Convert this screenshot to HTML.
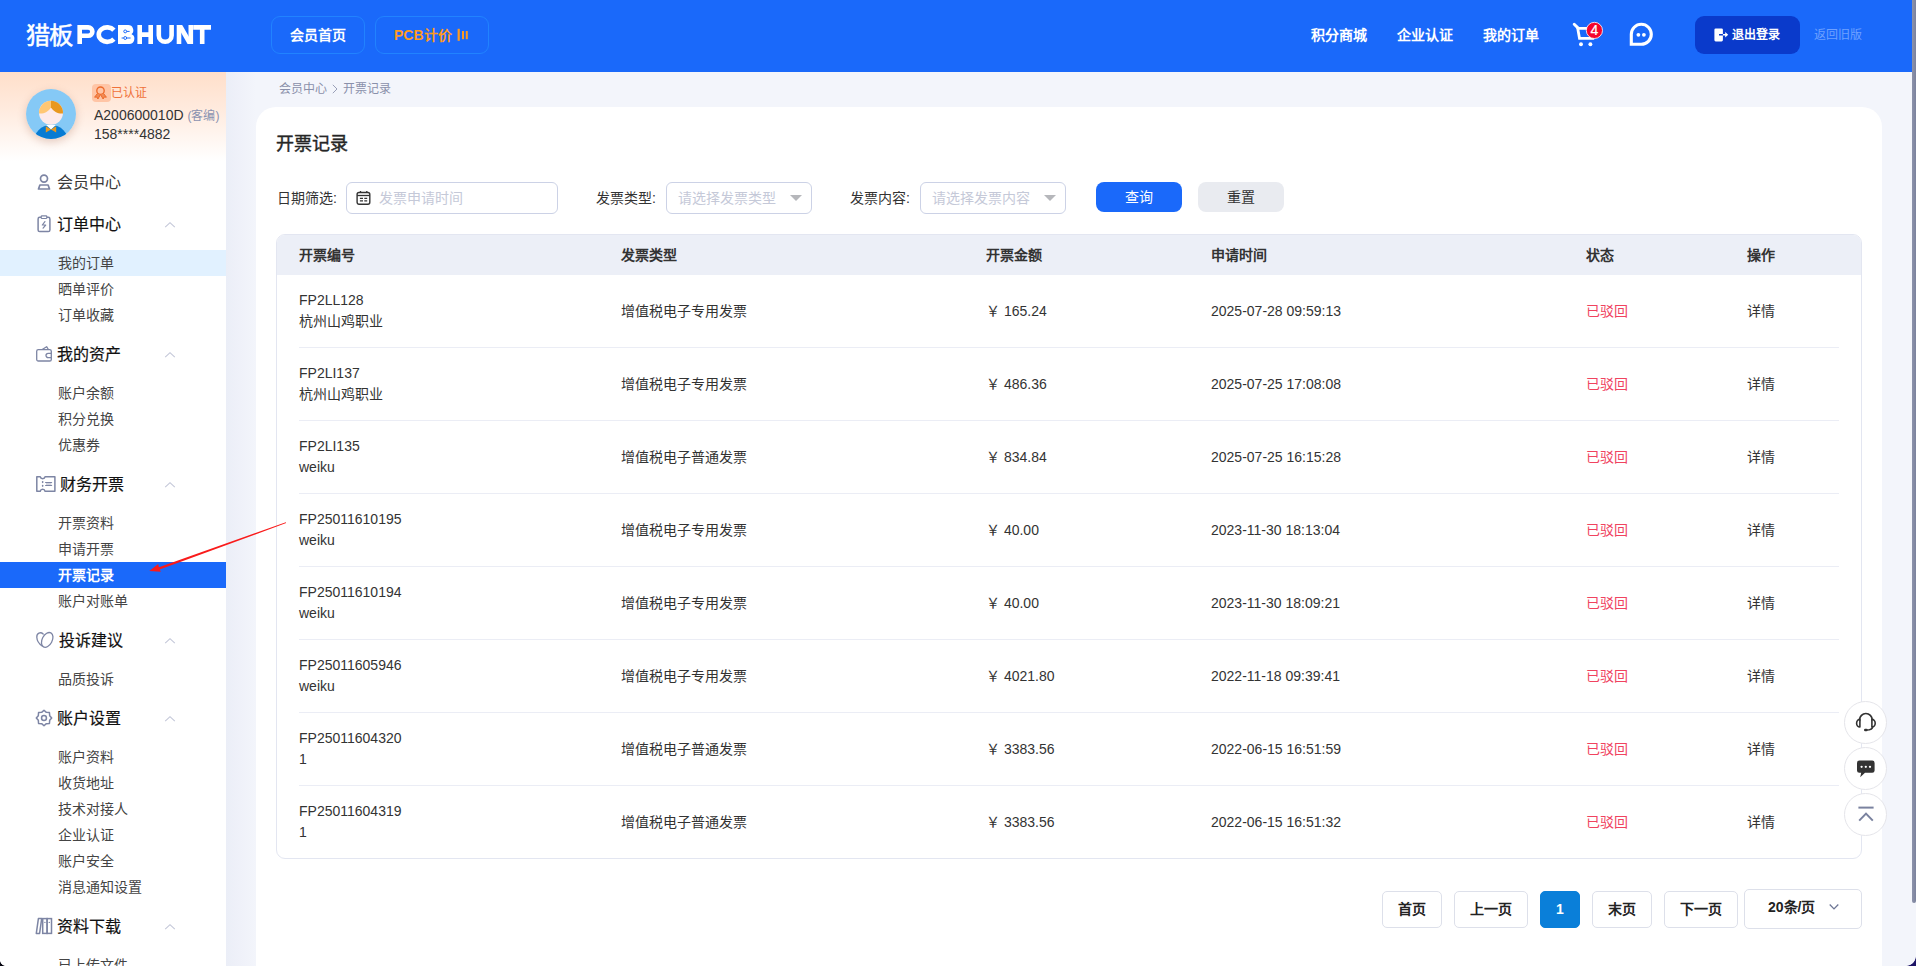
<!DOCTYPE html>
<html lang="zh-CN">
<head>
<meta charset="utf-8">
<title>开票记录</title>
<style>
*{box-sizing:border-box;margin:0;padding:0}
html,body{width:1916px;height:966px;overflow:hidden}
body{position:relative;background:#f3f5fb;font-family:"Liberation Sans",sans-serif;font-size:14px;color:#333;}
.abs{position:absolute}
/* header */
#hd{position:absolute;left:0;top:0;width:1916px;height:72px;background:#1a69fa}
.nb{position:absolute;top:16px;height:38px;border:1px solid #2183ff;border-radius:9px;font-weight:bold;font-size:14px;line-height:37px;color:#fff;white-space:nowrap}
.hl{position:absolute;top:0;height:72px;line-height:70px;font-size:14px;font-weight:bold;color:#fff;white-space:nowrap}
/* sidebar */
#sb{position:absolute;left:0;top:72px;width:226px;height:894px;background:#fff;overflow:hidden}
#sbsh{position:absolute;left:226px;top:72px;width:30px;height:894px;background:linear-gradient(90deg,#ebeef7 0,#eff1f9 45%,#f3f5fb 100%)}
#usr{position:absolute;left:0;top:0;width:226px;height:89px;background:linear-gradient(180deg,#ffdfca 0,#ffeadd 40%,#fff 100%)}
.gh{position:absolute;left:0;width:226px;height:42px;line-height:42px;font-size:16px;color:#222;white-space:nowrap}
.gh span{position:absolute;left:56.5px;top:0}
.gh svg.ic{position:absolute;left:35px;top:12px}
.gh svg.ch{position:absolute;left:164px;top:17px}
.si{position:absolute;left:0;width:226px;height:26px;line-height:26px;font-size:14px;color:#444;padding-left:58px;white-space:nowrap}
.si.hv{background:#e1f1ff}
.si.on{background:#1a69fa;color:#fff;font-weight:bold}
/* main */
#card{position:absolute;left:256px;top:107px;width:1626px;height:880px;background:#fff;border-radius:20px}

.fl{position:absolute;top:186px;height:24px;line-height:24px;font-size:14px;color:#333;white-space:nowrap}
.fb{position:absolute;top:182px;height:32px;border:1px solid #ccd2e6;border-radius:6px;background:#fff}
.fb span{position:absolute;top:3px;line-height:24px;font-size:14px;color:#c5c9d8;white-space:nowrap}
.fb i{position:absolute;right:9px;top:12px;width:0;height:0;border-left:6px solid transparent;border-right:6px solid transparent;border-top:6px solid #b6b7bb}
.bt{position:absolute;top:182px;width:86px;height:30px;border-radius:8px;font-size:14px;line-height:31px;text-align:center}
.th{position:absolute;top:243px;font-size:14px;line-height:24px;font-weight:bold;color:#333;white-space:nowrap}
.td{position:absolute;font-size:14px;line-height:21px;color:#333;white-space:nowrap}
.pg{position:absolute;top:891px;height:37px;border:1px solid #dde0ea;border-radius:5px;background:#fff;font-size:14px;font-weight:bold;color:#222;line-height:35px;text-align:center;white-space:nowrap}
.fc{position:absolute;left:1844px;width:43px;height:43px;border-radius:50%;border:1px solid #e5e5ea;background:#fff}
</style>
</head>
<body>
<!-- ================= HEADER ================= -->
<div id="hd">
  <svg class="abs" style="left:24px;top:20px" width="192" height="30" viewBox="0 0 192 30">
    <text x="1.5" y="24" font-family="Liberation Sans, sans-serif" font-size="23.5" font-weight="500" fill="#fff" stroke="#fff" stroke-width="0.5" textLength="47.5" lengthAdjust="spacingAndGlyphs">猎板</text>
    <g fill="none" stroke="#fff" stroke-width="4.6">
      <path d="M55.7 24.1 V7.4 H64.2 a4.2 4.2 0 0 1 0 8.4 H55.7"/>
      <path d="M89.9 10.1 A8.5 7.25 0 1 0 89.9 19.1"/>
      <path d="M115.7 5.1 V24.1 M126.7 5.1 V24.1 M115.7 14.6 H126.7"/>
      <path d="M134.8 5.1 V15.4 a6.4 6.4 0 0 0 12.8 0 V5.1"/>
      <path d="M155 24.1 V5.1 M166.8 5.1 V24.1"/>
      <path d="M169.2 7.4 H187 M178.2 7.4 V24.1"/>
    </g>
    <path d="M152.7 5.1 H158.2 L169.1 24.1 H163.6 Z" fill="#fff"/>
    <path d="M94 5.1 H104.2 a5.1 5.1 0 0 1 3.4 8.9 a5.4 5.4 0 0 1 -2.4 10.1 H94 Z" fill="#fff"/>
    <g stroke="#1a69fa" stroke-width="1" fill="none"><circle cx="101.2" cy="11.4" r="1.45"/><circle cx="101.2" cy="18" r="1.45"/><path d="M102.7 11.4 H105.6 M102.7 18 H106.6 M99.7 18 H97.6"/></g><path d="M110.6 13.6 L107.4 14.3 L110.6 15 Z" fill="#1a69fa"/>
  </svg>
  <div class="nb" style="left:271px;width:94px;text-align:center">会员首页</div>
  <div class="nb" style="left:375px;width:114px;color:#ff9a1f;padding-left:18px">PCB计价
    <svg class="abs" style="left:81px;top:11px" width="12" height="14" viewBox="0 0 12 14"><rect x="0.6" y="0.8" width="2.2" height="12" fill="#ff9a1f"/><rect x="5" y="3" width="2" height="8.2" fill="#ff9a1f"/><rect x="8.8" y="3" width="2" height="8.2" fill="#ff9a1f"/></svg>
  </div>
  <div class="hl" style="left:1311px">积分商城</div>
  <div class="hl" style="left:1397px">企业认证</div>
  <div class="hl" style="left:1483px">我的订单</div>
  <!-- cart -->
  <svg class="abs" style="left:1570px;top:20px" width="36" height="30" viewBox="0 0 36 30">
    <path d="M4.2 4.2 L7.7 7.6" fill="none" stroke="#fff" stroke-width="2.9" stroke-linecap="round"/>
    <path d="M7.7 8.3 L9.5 18.3 H23 L25.6 8.3 Z" fill="none" stroke="#fff" stroke-width="2.8" stroke-linejoin="miter"/>
    <circle cx="11" cy="24.2" r="1.95" fill="#fff"/><circle cx="20.4" cy="24.2" r="1.95" fill="#fff"/>
    <circle cx="24.4" cy="10.4" r="8.1" fill="#f5052c" stroke="#fff" stroke-width="0.8"/>
    <text x="24.4" y="15.3" text-anchor="middle" font-family="Liberation Sans, sans-serif" font-size="14" fill="#fff" stroke="#fff" stroke-width="0.2">4</text>
  </svg>
  <!-- chat -->
  <svg class="abs" style="left:1628px;top:21px" width="28" height="28" viewBox="0 0 28 28">
    <path d="M3.3 23.3 L3.3 13.3 A10 10 0 1 1 13.3 23.3 Z" fill="none" stroke="#fff" stroke-width="3.1" stroke-linejoin="miter"/>
    <circle cx="10.4" cy="13.8" r="1.9" fill="#fff"/><circle cx="15.9" cy="13.8" r="1.9" fill="#fff"/>
  </svg>
  <div class="abs" style="left:1695px;top:16px;width:105px;height:38px;border-radius:9px;background:#0a3acb;color:#fff;font-weight:bold;font-size:12px;line-height:39px;padding-left:37px;white-space:nowrap">退出登录
    <svg class="abs" style="left:19px;top:12px" width="15" height="14" viewBox="0 0 15 14"><path d="M1.7 0.4 h5.9 a1.3 1.3 0 0 1 1.3 1.3 v4.2 h-3.9 v1.6 h3.9 v4.6 a1.3 1.3 0 0 1 -1.3 1.3 h-5.9 a1.3 1.3 0 0 1 -1.3 -1.3 v-10.4 a1.3 1.3 0 0 1 1.3 -1.3 z" fill="#fff"/><path d="M8.9 5.9 h2.3 v-2 l3 2.8 l-3 2.8 v-2 h-2.3 z" fill="#fff"/></svg>
  </div>
  <div class="abs" style="left:1814px;top:0;height:72px;line-height:70px;font-size:12px;color:#6fa1ff;white-space:nowrap">返回旧版</div>
</div>

<!-- ================= SIDEBAR ================= -->
<div id="sbsh"></div>
<div id="sb">
  <div id="usr"></div>
  <!--SB_START-->
<div class="abs" style="left:26px;top:17px;width:50px;height:50px;border-radius:50%;box-shadow:0 3px 9px rgba(170,110,80,.32)">
<svg width="50" height="50" viewBox="0 0 50 50"><defs><clipPath id="avc"><circle cx="25" cy="25" r="25"/></clipPath></defs>
<circle cx="25" cy="25" r="25" fill="#85c9f6"/>
<g clip-path="url(#avc)"><circle cx="25" cy="53.6" r="17.6" fill="#077bd3"/>
<path d="M20 36 H30 L25 40.4 Z" fill="#fff"/>
<path d="M19.8 37.2 L25 40.6 L19.8 43.6 Z M30.2 37.2 L25 40.6 L30.2 43.6 Z" fill="#e89820"/>
<circle cx="25" cy="23.8" r="12" fill="#fdeaea"/>
<path d="M13 24.4 A12 12 0 0 1 25 11.8 V18.4 C22.6 22.6 17.4 25 13 24.4 Z" fill="#ffc774"/>
<path d="M37 24.4 A12 12 0 0 0 25 11.8 V18.4 C27.4 22.6 32.6 25 37 24.4 Z" fill="#e89820"/></g></svg></div>
<div class="abs" style="left:92px;top:12px;width:19px;height:18px;border-radius:4px;background:#ffc5a6"></div>
<svg class="abs" style="left:92px;top:12px" width="19" height="18" viewBox="0 0 19 18"><circle cx="8.5" cy="6.7" r="3.7" fill="none" stroke="#ee6a2a" stroke-width="1.35"/><path d="M5.5 9.4 L2.6 13.2 L4.9 13 L5.9 15 L8.2 11 M11.5 9.4 L14.4 13.2 L12.1 13 L11.1 15 L8.8 11" fill="#f08a55" stroke="#ee6a2a" stroke-width="1" stroke-linejoin="round"/></svg>
<div class="abs" style="left:111px;top:11px;font-size:12px;line-height:20px;color:#f0723a;white-space:nowrap">已认证</div>
<div class="abs" style="left:94px;top:33px;font-size:14px;line-height:20px;color:#333;white-space:nowrap">A200600010D <span style="font-size:12px;color:#8a92b0;margin-left:0">(客编)</span></div>
<div class="abs" style="left:94px;top:52px;font-size:14px;line-height:20px;color:#333;white-space:nowrap">158****4882</div>
<div class="gh" style="top:90px;color:#3a3a3a"><svg class="ic" style="left:36px;top:11px" width="16" height="18" viewBox="0 0 16 18"><circle cx="8" cy="5.6" r="3.5" fill="none" stroke="#7d85a4" stroke-width="1.7"/><path d="M3.9 12 H12.1 L13.5 16 H2.5 Z" fill="none" stroke="#7d85a4" stroke-width="1.7" stroke-linejoin="round"/></svg><span style="left:56.5px">会员中心</span></div>
<div class="gh" style="top:132px;-webkit-text-stroke:0.18px #111;color:#111"><svg class="ic" style="left:36px;top:11px" width="16" height="18" viewBox="0 0 16 18"><rect x="2.1" y="2.3" width="11.8" height="14.3" rx="1.6" fill="none" stroke="#7d85a4" stroke-width="1.5"/><rect x="5.2" y="0.9" width="5.6" height="2.6" rx="0.8" fill="#fff" stroke="#7d85a4" stroke-width="1.2"/><path d="M8.9 6.6 L6.3 10 H9.7 L7.1 13.2" fill="none" stroke="#7d85a4" stroke-width="1.2" stroke-linejoin="round" stroke-linecap="round"/></svg><span style="left:56.5px">订单中心</span><svg class="ch" width="12" height="8" viewBox="0 0 12 8"><path d="M1.2 6.2 L6 1.7 L10.8 6.2" fill="none" stroke="#c3c7d8" stroke-width="1.1"/></svg></div>
<div class="si hv" style="top:178px">我的订单</div>
<div class="si " style="top:204px">晒单评价</div>
<div class="si " style="top:230px">订单收藏</div>
<div class="gh" style="top:262px;-webkit-text-stroke:0.18px #111;color:#111"><svg class="ic" style="left:35px;top:10px" width="18" height="18" viewBox="0 0 18 18"><rect x="1.7" y="5.6" width="14.6" height="11.4" rx="1.6" fill="none" stroke="#7d85a4" stroke-width="1.3"/><path d="M7.2 5.5 L11.6 2.7 L13.4 5.5" fill="none" stroke="#7d85a4" stroke-width="1.3" stroke-linejoin="round"/><path d="M16.3 9.3 H13.2 a2.2 2.2 0 0 0 0 4.4 H16.3" fill="none" stroke="#7d85a4" stroke-width="1.3"/></svg><span style="left:56.5px">我的资产</span><svg class="ch" width="12" height="8" viewBox="0 0 12 8"><path d="M1.2 6.2 L6 1.7 L10.8 6.2" fill="none" stroke="#c3c7d8" stroke-width="1.1"/></svg></div>
<div class="si " style="top:308px">账户余额</div>
<div class="si " style="top:334px">积分兑换</div>
<div class="si " style="top:360px">优惠券</div>
<div class="gh" style="top:392px;-webkit-text-stroke:0.18px #111;color:#111"><svg class="ic" style="left:35px;top:11px" width="22" height="18" viewBox="0 0 22 18"><path d="M1.8 1.7 H5.2 a2.5 2.5 0 0 0 4.9 0 H19.9 V16.3 H10.1 a2.5 2.5 0 0 0 -4.9 0 H1.8 Z" fill="none" stroke="#7d85a4" stroke-width="1.5" stroke-linejoin="round"/><ellipse cx="7.65" cy="7.1" rx="0.85" ry="1.15" fill="#7d85a4"/><ellipse cx="7.65" cy="10.8" rx="0.85" ry="1.15" fill="#7d85a4"/><path d="M10.6 7.5 H16.6 M10.6 10.5 H16.6" stroke="#7d85a4" stroke-width="1.2" stroke-linecap="round"/><rect x="11" y="8" width="5.4" height="2" fill="#7d85a4" opacity="0.35"/></svg><span style="left:59.5px">财务开票</span><svg class="ch" width="12" height="8" viewBox="0 0 12 8"><path d="M1.2 6.2 L6 1.7 L10.8 6.2" fill="none" stroke="#c3c7d8" stroke-width="1.1"/></svg></div>
<div class="si " style="top:438px">开票资料</div>
<div class="si " style="top:464px">申请开票</div>
<div class="si on" style="top:490px">开票记录</div>
<div class="si " style="top:516px">账户对账单</div>
<div class="gh" style="top:548px;-webkit-text-stroke:0.18px #111;color:#111"><svg class="ic" style="left:35px;top:10px" width="20" height="20" viewBox="0 0 20 20"><ellipse cx="12.2" cy="9.9" rx="5" ry="7.9" transform="rotate(28 12.2 9.9)" fill="none" stroke="#7d85a4" stroke-width="1.3"/><path d="M8.2 4 C5.6 1.6 1.6 3 1.8 7.2 C2 11 4.6 14.2 7.2 16" fill="none" stroke="#7d85a4" stroke-width="1.3" stroke-linecap="round"/></svg><span style="left:58.5px">投诉建议</span><svg class="ch" width="12" height="8" viewBox="0 0 12 8"><path d="M1.2 6.2 L6 1.7 L10.8 6.2" fill="none" stroke="#c3c7d8" stroke-width="1.1"/></svg></div>
<div class="si " style="top:594px">品质投诉</div>
<div class="gh" style="top:626px;-webkit-text-stroke:0.18px #111;color:#111"><svg class="ic" style="left:35px;top:11px" width="18" height="18" viewBox="0 0 18 18"><path d="M9.00 1.30 L11.35 3.32 L14.44 3.56 L14.68 6.65 L16.70 9.00 L14.68 11.35 L14.44 14.44 L11.35 14.68 L9.00 16.70 L6.65 14.68 L3.56 14.44 L3.32 11.35 L1.30 9.00 L3.32 6.65 L3.56 3.56 L6.65 3.32 Z" fill="none" stroke="#7d85a4" stroke-width="1.5" stroke-linejoin="round"/><circle cx="9" cy="9" r="2.45" fill="none" stroke="#7d85a4" stroke-width="1.5"/></svg><span style="left:56.5px">账户设置</span><svg class="ch" width="12" height="8" viewBox="0 0 12 8"><path d="M1.2 6.2 L6 1.7 L10.8 6.2" fill="none" stroke="#c3c7d8" stroke-width="1.1"/></svg></div>
<div class="si " style="top:672px">账户资料</div>
<div class="si " style="top:698px">收货地址</div>
<div class="si " style="top:724px">技术对接人</div>
<div class="si " style="top:750px">企业认证</div>
<div class="si " style="top:776px">账户安全</div>
<div class="si " style="top:802px">消息通知设置</div>
<div class="gh" style="top:834px;-webkit-text-stroke:0.18px #111;color:#111"><svg class="ic" style="left:35px;top:11px" width="18" height="18" viewBox="0 0 18 18"><path d="M3.4 1.6 H6.7 L4.6 16.4 H1.3 Z" fill="none" stroke="#7d85a4" stroke-width="1.5" stroke-linejoin="round"/><rect x="7.7" y="1.6" width="4.4" height="14.8" fill="none" stroke="#7d85a4" stroke-width="1.5"/><rect x="12.1" y="1.6" width="4.4" height="14.8" fill="none" stroke="#7d85a4" stroke-width="1.5"/><circle cx="9.9" cy="5.4" r="0.7" fill="#7d85a4"/><circle cx="14.3" cy="5.4" r="0.7" fill="#7d85a4"/></svg><span style="left:56.5px">资料下载</span><svg class="ch" width="12" height="8" viewBox="0 0 12 8"><path d="M1.2 6.2 L6 1.7 L10.8 6.2" fill="none" stroke="#c3c7d8" stroke-width="1.1"/></svg></div>
<div class="si " style="top:880px">已上传文件</div>
  <!--SB_END-->
</div>

<!-- ================= MAIN ================= -->
<div class="abs" style="left:279px;top:80px;font-size:12px;line-height:18px;color:#8a90aa;white-space:nowrap">会员中心<svg style="display:inline-block;vertical-align:-1px;margin:0 5px 0 5px" width="6" height="10" viewBox="0 0 6 10"><path d="M0.8 0.8 L5 5 L0.8 9.2" fill="none" stroke="#9aa0b8" stroke-width="1"/></svg>开票记录</div>
<div id="card">
</div>
<!--MAIN_S-->
<div class="abs" style="left:276px;top:130px;font-size:18px;line-height:28px;font-weight:400;-webkit-text-stroke:0.42px #262626;color:#262626;white-space:nowrap">开票记录</div>
<div class="fl" style="left:277px">日期筛选:</div>
<div class="fb" style="left:346px;width:212px"><svg class="abs" style="left:9px;top:7px" width="16" height="16" viewBox="0 0 16 16"><rect x="1.1" y="2.5" width="12.7" height="11.7" rx="1.9" fill="none" stroke="#333" stroke-width="1.4"/><path d="M1.1 5.5 H13.8" stroke="#333" stroke-width="1.3"/><path d="M4.5 1 V3 M10.8 1 V3" stroke="#333" stroke-width="1.3"/><path d="M3.9 8.35 H7 M8.3 8.35 H11.2 M3.9 10.9 H7 M8.3 10.9 H11.2" stroke="#333" stroke-width="1.3"/></svg><span style="left:32px">发票申请时间</span></div>
<div class="fl" style="left:596px">发票类型:</div>
<div class="fb" style="left:666px;width:146px"><span style="left:10.5px">请选择发票类型</span><i></i></div>
<div class="fl" style="left:850px">发票内容:</div>
<div class="fb" style="left:920px;width:146px"><span style="left:10.5px">请选择发票内容</span><i></i></div>
<div class="bt" style="left:1096px;background:#1a69fa;color:#fff">查询</div>
<div class="bt" style="left:1198px;background:#e9ebf0;color:#333">重置</div>
<div class="abs" style="left:276px;top:234px;width:1586px;height:625px;border:1px solid #e3e6f1;border-radius:9px;background:#fff;overflow:hidden"><div style="height:41px;background:#eceff7;margin:-1px -1px 0 -1px"></div></div>
<div class="th" style="left:299px">开票编号</div>
<div class="th" style="left:621px">发票类型</div>
<div class="th" style="left:986px">开票金额</div>
<div class="th" style="left:1211px">申请时间</div>
<div class="th" style="left:1586px">状态</div>
<div class="th" style="left:1747px">操作</div>
<div class="td" style="left:299px;top:290px">FP2LL128<br>杭州山鸡职业</div>
<div class="td" style="left:621px;top:300.5px">增值税电子专用发票</div>
<div class="td" style="left:986px;top:300.5px">￥ 165.24</div>
<div class="td" style="left:1211px;top:300.5px">2025-07-28 09:59:13</div>
<div class="td" style="left:1586px;top:300.5px;color:#f0435f">已驳回</div>
<div class="td" style="left:1747px;top:300.5px">详情</div>
<div class="abs" style="left:299px;top:347px;width:1540px;height:1px;background:#ebedf5"></div>
<div class="td" style="left:299px;top:363px">FP2LI137<br>杭州山鸡职业</div>
<div class="td" style="left:621px;top:373.5px">增值税电子专用发票</div>
<div class="td" style="left:986px;top:373.5px">￥ 486.36</div>
<div class="td" style="left:1211px;top:373.5px">2025-07-25 17:08:08</div>
<div class="td" style="left:1586px;top:373.5px;color:#f0435f">已驳回</div>
<div class="td" style="left:1747px;top:373.5px">详情</div>
<div class="abs" style="left:299px;top:420px;width:1540px;height:1px;background:#ebedf5"></div>
<div class="td" style="left:299px;top:436px">FP2LI135<br>weiku</div>
<div class="td" style="left:621px;top:446.5px">增值税电子普通发票</div>
<div class="td" style="left:986px;top:446.5px">￥ 834.84</div>
<div class="td" style="left:1211px;top:446.5px">2025-07-25 16:15:28</div>
<div class="td" style="left:1586px;top:446.5px;color:#f0435f">已驳回</div>
<div class="td" style="left:1747px;top:446.5px">详情</div>
<div class="abs" style="left:299px;top:493px;width:1540px;height:1px;background:#ebedf5"></div>
<div class="td" style="left:299px;top:509px">FP25011610195<br>weiku</div>
<div class="td" style="left:621px;top:519.5px">增值税电子专用发票</div>
<div class="td" style="left:986px;top:519.5px">￥ 40.00</div>
<div class="td" style="left:1211px;top:519.5px">2023-11-30 18:13:04</div>
<div class="td" style="left:1586px;top:519.5px;color:#f0435f">已驳回</div>
<div class="td" style="left:1747px;top:519.5px">详情</div>
<div class="abs" style="left:299px;top:566px;width:1540px;height:1px;background:#ebedf5"></div>
<div class="td" style="left:299px;top:582px">FP25011610194<br>weiku</div>
<div class="td" style="left:621px;top:592.5px">增值税电子专用发票</div>
<div class="td" style="left:986px;top:592.5px">￥ 40.00</div>
<div class="td" style="left:1211px;top:592.5px">2023-11-30 18:09:21</div>
<div class="td" style="left:1586px;top:592.5px;color:#f0435f">已驳回</div>
<div class="td" style="left:1747px;top:592.5px">详情</div>
<div class="abs" style="left:299px;top:639px;width:1540px;height:1px;background:#ebedf5"></div>
<div class="td" style="left:299px;top:655px">FP25011605946<br>weiku</div>
<div class="td" style="left:621px;top:665.5px">增值税电子专用发票</div>
<div class="td" style="left:986px;top:665.5px">￥ 4021.80</div>
<div class="td" style="left:1211px;top:665.5px">2022-11-18 09:39:41</div>
<div class="td" style="left:1586px;top:665.5px;color:#f0435f">已驳回</div>
<div class="td" style="left:1747px;top:665.5px">详情</div>
<div class="abs" style="left:299px;top:712px;width:1540px;height:1px;background:#ebedf5"></div>
<div class="td" style="left:299px;top:728px">FP25011604320<br>1</div>
<div class="td" style="left:621px;top:738.5px">增值税电子普通发票</div>
<div class="td" style="left:986px;top:738.5px">￥ 3383.56</div>
<div class="td" style="left:1211px;top:738.5px">2022-06-15 16:51:59</div>
<div class="td" style="left:1586px;top:738.5px;color:#f0435f">已驳回</div>
<div class="td" style="left:1747px;top:738.5px">详情</div>
<div class="abs" style="left:299px;top:785px;width:1540px;height:1px;background:#ebedf5"></div>
<div class="td" style="left:299px;top:801px">FP25011604319<br>1</div>
<div class="td" style="left:621px;top:811.5px">增值税电子普通发票</div>
<div class="td" style="left:986px;top:811.5px">￥ 3383.56</div>
<div class="td" style="left:1211px;top:811.5px">2022-06-15 16:51:32</div>
<div class="td" style="left:1586px;top:811.5px;color:#f0435f">已驳回</div>
<div class="td" style="left:1747px;top:811.5px">详情</div>
<div class="pg" style="left:1382px;width:60px">首页</div>
<div class="pg" style="left:1454px;width:74px">上一页</div>
<div class="pg" style="left:1592px;width:60px">末页</div>
<div class="pg" style="left:1664px;width:74px">下一页</div>
<div class="pg" style="left:1540px;width:40px;background:#0a7fd9;border-color:#0a7fd9;color:#fff">1</div>
<div class="abs" style="left:1744px;top:889px;width:118px;height:40px;border:1px solid #dde0ea;border-radius:5px;background:#fff;font-size:14px;font-weight:bold;color:#222;line-height:35px;padding-left:23px;white-space:nowrap">20条/页<svg class="abs" style="left:83px;top:13px" width="12" height="8" viewBox="0 0 12 8"><path d="M1.7 1.5 L6 5.9 L10.3 1.5" fill="none" stroke="#6f7896" stroke-width="1.3"/></svg></div>
<!--MAIN_E-->

<!--FLOATING_S-->
<div class="fc" style="top:701px"><svg class="abs" style="left:9px;top:8px" width="24" height="24" viewBox="0 0 24 24"><path d="M5.6 11.2 V9.8 a6.3 6.3 0 0 1 12.6 0 V11.2" fill="none" stroke="#333" stroke-width="1.7"/><path d="M5.9 9.4 a3.3 3.8 0 0 0 0 7.6 Z M17.9 9.4 a3.3 3.8 0 0 1 0 7.6 Z" fill="#fff" stroke="#333" stroke-width="1.6" stroke-linejoin="round"/><path d="M18.6 16.4 c0 2.6 -2.6 3.6 -6 3.6" fill="none" stroke="#333" stroke-width="1.6"/><rect x="10" y="18.7" width="3.6" height="2.6" rx="1.2" fill="#333"/></svg></div>
<div class="fc" style="top:747px"><svg class="abs" style="left:9px;top:9px" width="24" height="24" viewBox="0 0 24 24"><path d="M5.4 3.6 H18.2 a2.4 2.4 0 0 1 2.4 2.4 V13.4 a2.4 2.4 0 0 1 -2.4 2.4 H11 L6.2 20.2 L7.2 15.8 H5.4 a2.4 2.4 0 0 1 -2.4 -2.4 V6 a2.4 2.4 0 0 1 2.4 -2.4 Z" fill="#333"/><circle cx="7.6" cy="9.8" r="1.15" fill="#fff"/><circle cx="11.8" cy="9.8" r="1.15" fill="#fff"/><circle cx="16" cy="9.8" r="1.15" fill="#fff"/></svg></div>
<div class="fc" style="top:793px"><svg class="abs" style="left:9px;top:9px" width="24" height="24" viewBox="0 0 24 24"><path d="M4.4 4.6 H19.6" stroke="#7a829f" stroke-width="2"/><path d="M5.2 17.6 L12 10.6 L18.8 17.6" fill="none" stroke="#7a829f" stroke-width="2"/></svg></div>
<svg class="abs" style="left:140px;top:510px" width="160" height="70" viewBox="0 0 160 70"><path d="M146.2 13.1 L19.7 59.5 L20.9 61.7 L9.3 61.1 L18.2 54 L18.9 57.3 L145.8 12.3 Z" fill="#f91b1b"/></svg>
<div class="abs" style="left:0;top:960px;width:6px;height:6px;background:radial-gradient(circle at 100% 0,rgba(0,0,0,0) 5.6px,#050510 6.3px)"></div>
<div class="abs" style="left:1906px;top:956px;width:10px;height:10px;background:radial-gradient(circle at 0 0,rgba(0,0,0,0) 9.5px,#1d1466 10.2px)"></div>
<!--FLOATING_E-->
<!-- scrollbar + window corners -->
<div class="abs" style="left:1912px;top:0;width:4px;height:903px;background:linear-gradient(90deg,#8d93ab 0,#7b829d 100%);border-radius:0 0 2px 2px"></div>
</body>
</html>
